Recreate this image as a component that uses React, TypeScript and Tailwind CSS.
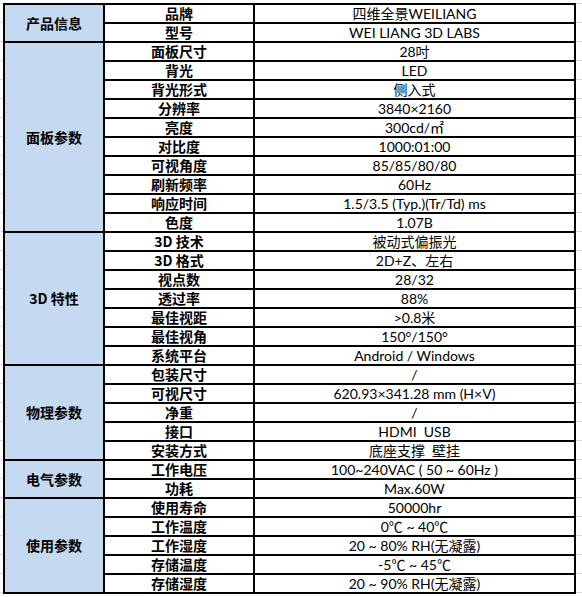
import React from 'react';

interface SpecGroup {
  title: string;
  rows: [string, string][];
}

const groups: SpecGroup[] = [
  {
    title: '产品信息',
    rows: [
      ['品牌', '四维全景WEILIANG'],
      ['型号', 'WEI LIANG 3D LABS'],
    ],
  },
  {
    title: '面板参数',
    rows: [
      ['面板尺寸', '28吋'],
      ['背光', 'LED'],
      ['背光形式', '侧入式'],
      ['分辨率', '3840×2160'],
      ['亮度', '300cd/㎡'],
      ['对比度', '1000:01:00'],
      ['可视角度', '85/85/80/80'],
      ['刷新频率', '60Hz'],
      ['响应时间', '1.5/3.5 (Typ.)(Tr/Td) ms'],
      ['色度', '1.07B'],
    ],
  },
  {
    title: '3D 特性',
    rows: [
      ['3D 技术', '被动式偏振光'],
      ['3D 格式', '2D+Z、左右'],
      ['视点数', '28/32'],
      ['透过率', '88%'],
      ['最佳视距', '>0.8米'],
      ['最佳视角', '150°/150°'],
      ['系统平台', 'Android / Windows'],
    ],
  },
  {
    title: '物理参数',
    rows: [
      ['包装尺寸', '/'],
      ['可视尺寸', '620.93×341.28 mm (H×V)'],
      ['净重', '/'],
      ['接口', 'HDMI  USB'],
      ['安装方式', '底座支撑  壁挂'],
    ],
  },
  {
    title: '电气参数',
    rows: [
      ['工作电压', '100~240VAC ( 50 ~ 60Hz )'],
      ['功耗', 'Max.60W'],
    ],
  },
  {
    title: '使用参数',
    rows: [
      ['使用寿命', '50000hr'],
      ['工作温度', '0℃ ~ 40℃'],
      ['工作湿度', '20 ~ 80% RH(无凝露)'],
      ['存储温度', '-5℃ ~ 45℃'],
      ['存储湿度', '20 ~ 90% RH(无凝露)'],
    ],
  },
];

export default function App() {
  return (
    <div
      className="w-[582px] h-[597px] overflow-hidden bg-white pl-[3px] pt-[3px] bg-[linear-gradient(to_bottom,#dadada_1px,transparent_1px)] bg-[length:100%_19px] bg-[position:0_3px] text-black font-['Lato','Noto_Sans_CJK_SC',sans-serif]"
    >
      <table className="table-fixed border-collapse w-[571px] border-2 border-black">
        <colgroup>
          <col className="w-[100px]" />
          <col className="w-[150px]" />
          <col className="w-[321px]" />
        </colgroup>
        <tbody>
          {groups.map((group) =>
            group.rows.map(([name, value], index) => (
              <tr key={group.title + name} className="h-[19px]">
                {index === 0 && (
                  <td
                    rowSpan={group.rows.length}
                    className="border-2 border-black bg-[#c5d9f1] p-0 text-center align-middle text-[14px] font-bold leading-[17px] font-['Noto_Sans_CJK_SC',sans-serif]"
                  >
                    {group.title}
                  </td>
                )}
                <td className="border-2 border-black bg-white p-0 text-center align-middle text-[14px] font-bold leading-[15px] font-['Noto_Sans_CJK_SC',sans-serif]">
                  {name}
                </td>
                <td className="border-2 border-black bg-white p-0 text-center align-middle text-[14px] leading-[15px] whitespace-pre">
                  {value}
                </td>
              </tr>
            ))
          )}
        </tbody>
      </table>
    </div>
  );
}
